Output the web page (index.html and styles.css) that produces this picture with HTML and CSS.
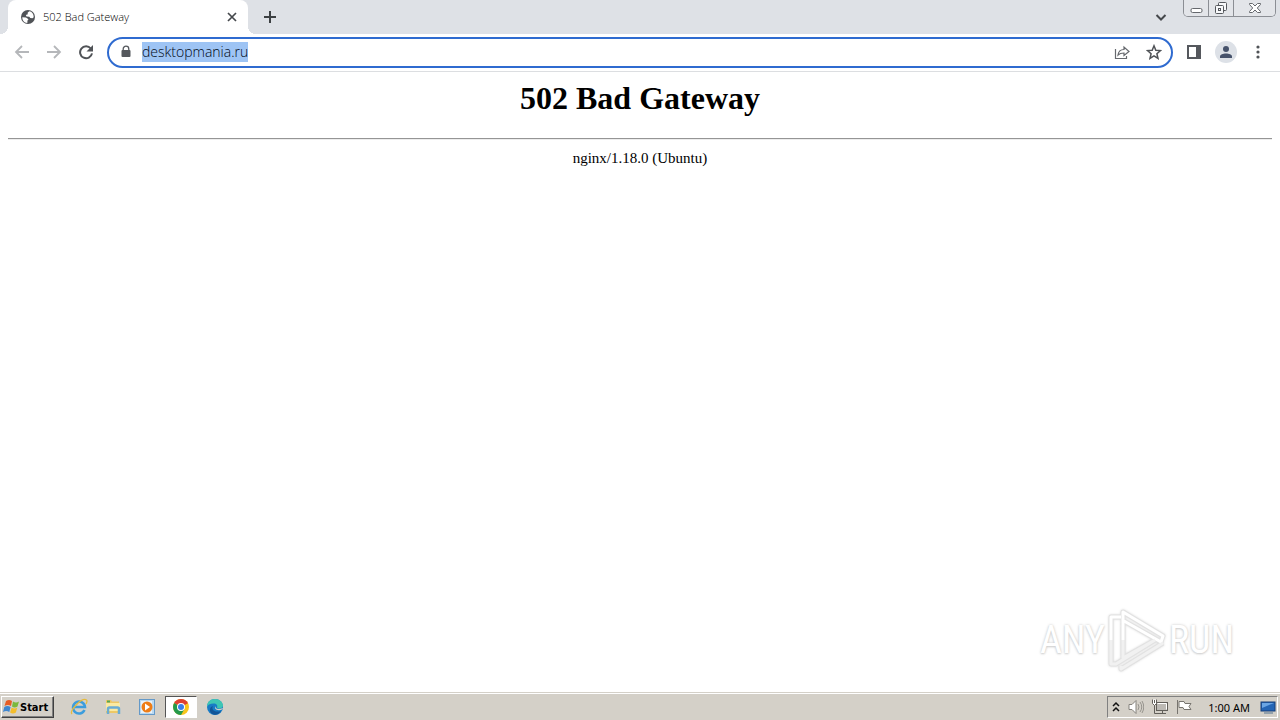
FILE: index.html
```html
<!DOCTYPE html>
<html lang="en">
<head>
<meta charset="utf-8">
<title>502 Bad Gateway</title>
<link rel="stylesheet" href="styles.css">
</head>
<body>
<div class="desktop">
  <header class="tabstrip">
    <div class="tab">
      <svg class="favicon" width="16" height="16" viewBox="0 0 16 16"><circle cx="8" cy="8" r="7" fill="#505357"/><path d="M2.3 8.2 6 8.4l2.500 1.900-1 1.200-.2 2.400C4.400 14 2.300 11.500 2.300 8.200zM9.300 2.300 7.600 3.800l.2 1.500-2 .8.700 1.400 2.800.2 1 1.400 2.200.2 1.200-1C13.800 5 12 2.600 9.300 2.300z" fill="#fff"/></svg>
      <span class="tab-title">502 Bad Gateway</span>
      <button class="plain tab-close" aria-label="Close tab"><svg width="16" height="16" viewBox="0 0 16 16"><path d="m4 4 8 8m0-8-8 8" stroke="#45484c" stroke-width="1.700"/></svg></button>
    </div>
    <button class="plain new-tab" aria-label="New tab"><svg width="16" height="16" viewBox="0 0 16 16"><path d="M8 2v12M2 8h12" stroke="#3c4043" stroke-width="2"/></svg></button>
    <button class="plain tab-search" aria-label="Search tabs"><svg width="16" height="16" viewBox="0 0 16 16"><path d="m3.500 6 4.500 4.500L12.500 6" fill="none" stroke="#45484c" stroke-width="2"/></svg></button>
    <div class="window-buttons">
      <button aria-label="Minimize"><svg width="16" height="16" viewBox="0 0 16 16"><rect x="3" y="8.500" width="11" height="4" rx="1.500" fill="#fff" stroke="#65686d"/></svg></button>
      <button aria-label="Restore"><svg width="16" height="16" viewBox="0 0 16 16"><g fill="#f7f8fa" stroke="#55585d"><rect x="5.500" y="2.500" width="8" height="8" rx="1"/><rect x="2.500" y="5.500" width="8" height="8" rx="1"/><rect x="5.500" y="8.500" width="2" height="2"/></g></svg></button>
      <button class="wide" aria-label="Close"><svg width="16" height="16" viewBox="0 0 16 16"><path d="M2.500 3.500h3L8 6l2.500-2.500h3v1L10.300 8l3.200 3.500v1h-3L8 10l-2.500 2.500h-3v-1L5.700 8 2.500 4.500z" fill="#fff" stroke="#65686d"/></svg></button>
    </div>
  </header>

  <nav class="toolbar">
    <button class="plain" aria-label="Back"><svg width="16" height="16" viewBox="0 0 16 16"><path d="M15 8H2m6-6L2 8l6 6" fill="none" stroke="#b5b7ba" stroke-width="1.800"/></svg></button>
    <button class="plain" aria-label="Forward"><svg width="16" height="16" viewBox="0 0 16 16"><path d="M1 8h13M8 2l6 6-6 6" fill="none" stroke="#b5b7ba" stroke-width="1.800"/></svg></button>
    <button class="plain" aria-label="Reload"><svg width="16" height="16" viewBox="0 0 16 16"><path d="M12.800 4.500A6 6 0 1 0 14 9.400" fill="none" stroke="#505357" stroke-width="2"/><path d="M15 1v6.500H8.500z" fill="#505357"/></svg></button>
    <div class="omnibox">
      <svg width="12" height="14" viewBox="0 0 12 14"><path d="M3.200 6V4a2.800 2.800 0 0 1 5.600 0v2" fill="none" stroke="#55585d" stroke-width="1.300"/><rect x="1.500" y="5" width="9" height="7" rx="1" fill="#55585d"/></svg>
      <input class="address" type="text" value="desktopmania.ru" aria-label="Address" spellcheck="false">
      <button class="plain" aria-label="Share"><svg width="16" height="16" viewBox="0 0 16 16"><path d="M1.500 5v9.500h11V12M4 11c.5-4 2.500-5.500 6-5.500V3l5 4.500-5 4V9C7.500 9 5.500 9.500 4 11z" fill="none" stroke="#66696e" stroke-width="1.200"/></svg></button>
      <button class="plain" aria-label="Bookmark this page"><svg width="16" height="16" viewBox="0 0 16 16"><path d="m8 1.800 1.800 4.400 4.700.4-3.600 3.100 1.100 4.600L8 11.800l-4 2.500 1.100-4.600-3.600-3.100 4.700-.4z" fill="none" stroke="#505357" stroke-width="1.500"/></svg></button>
    </div>
    <button class="plain" aria-label="Side panel"><svg width="16" height="16" viewBox="0 0 16 16"><path d="M1 1h14v14H1zM3 3v10h7V3z" fill="#55585d" fill-rule="evenodd"/></svg></button>
    <button class="plain avatar" aria-label="Profile"><svg width="16" height="16" viewBox="0 0 16 16"><circle cx="8" cy="5" r="3" fill="#46526b"/><path d="M2 14v-1.500C2 10.500 5 9.500 8 9.500s6 1 6 3V14z" fill="#46526b"/></svg></button>
    <button class="plain" aria-label="Menu"><svg width="16" height="16" viewBox="0 0 16 16"><g fill="#505357"><circle cx="8" cy="3" r="1.600"/><circle cx="8" cy="8" r="1.600"/><circle cx="8" cy="13" r="1.600"/></g></svg></button>
  </nav>

  <main class="page">
    <h1>502 Bad Gateway</h1>
    <hr>
    <p>nginx/1.18.0 (Ubuntu)</p>
    <div class="watermark" role="img" aria-label="ANY RUN">
      <span>ANY</span>
      <svg width="60" height="64" viewBox="0 0 60 64"><g fill="none" stroke-linejoin="round"><path d="M14 9H4v47h5L48 32M16 50V4l40 24-2 6-37-21M16 50l32-18M14 58v3l42-26" stroke="#e2e2e2" stroke-width="5"/><path d="M16 32V4l40 24-2 6-37-21M14 9H4v23" stroke="#fff" stroke-width="3"/><path d="M4 32v24h5L48 32M16 32v18l32-18M14 58v3l42-26" stroke="#f1f1f1" stroke-width="3"/></g></svg>
      <span>RUN</span>
    </div>
  </main>

  <footer class="taskbar">
    <button class="start"><svg width="17" height="16" viewBox="0 0 17 16"><path d="M3 2q3-2 6 0L8 7Q5 5 1.500 7z" fill="#e65c25"/><path d="M10 2.500q3 2 6 0l-1.500 5q-3 2-5.500 0z" fill="#7ab83c"/><path d="M1.300 8q3-1.800 6.300 0l-1.300 5q-3-2-6.300 0z" fill="#3e86d0"/><path d="M8.700 8.600q3 1.800 5.600 0l-1.400 5q-3 1.800-5.800 0z" fill="#f3bd2b"/></svg>Start</button>
    <div class="launchers">
      <button class="launcher" aria-label="Internet Explorer"><svg width="18" height="18" viewBox="0 0 18 18"><path d="M14.500 12A6 6 0 1 1 15 9H4" fill="none" stroke="#3c9ddd" stroke-width="2.500"/><path d="M2 16C-1 13 12-1 16.500 2c1 .8.300 2.500-.5 4" fill="none" stroke="#e6bb3d" stroke-width="1.300"/></svg></button>
      <button class="launcher" aria-label="Explorer"><svg width="18" height="18" viewBox="0 0 18 18"><path d="M2 2h5l1 1.500h7V15H2z" fill="#edc865"/><path d="M2 5h14v8H2z" fill="#faeaa2"/><path d="M4 16v-5q0-1.500 1.500-1.500h8Q15 9.500 15 11v5" fill="none" stroke="#69acd4" stroke-width="2.500"/><path d="M3 3.500h3" stroke="#55a657" stroke-width="2"/></svg></button>
      <button class="launcher" aria-label="Media Player"><svg width="18" height="18" viewBox="0 0 18 18"><rect x="1.500" y="1.500" width="15" height="15" fill="#b9d9f1" stroke="#6499c8"/><rect x="3" y="3" width="11" height="12" fill="#e9f2f9"/><circle cx="9" cy="9" r="5.500" fill="#ee7d16"/><path d="m7 5.500 5 3.500-5 3.500z" fill="#fff"/></svg></button>
      <button class="launcher active" aria-label="Chrome"><svg width="18" height="18" viewBox="0 0 18 18"><circle cx="9" cy="9" r="8" fill="#f8c51c"/><path d="M9 9 2.100 5A8 8 0 0 1 15.900 5z" fill="#de4032"/><path d="M2.100 5A8 8 0 0 0 9 17l3.500-6L9 9z" fill="#24994b"/><path d="M9 5h6.900L9 9z" fill="#de4032"/><circle cx="9" cy="9" r="4" fill="#fff"/><circle cx="9" cy="9" r="3" fill="#397ee9"/></svg></button>
      <button class="launcher" aria-label="Edge"><svg width="18" height="18" viewBox="0 0 18 18"><circle cx="9" cy="9" r="8" fill="#187bc5"/><path d="M1 9C1 4 4 1 9 1c5 0 8 3.500 8 6.500 0 3-5 4-6 2 1-2-.5-4-3.500-4C4 5.500 1.500 7 1 9z" fill="#3fc6b4"/><path d="M7 8c-2 3 1 7 8 5-2 4-7 5-10 2-2-3-1-6 2-7z" fill="#135597"/><path d="M10 8c-1 3 2 4 7 2-1 3-7 3-8 0z" fill="#d4d0c8"/></svg></button>
    </div>
    <div class="tray">
      <svg width="8" height="12" viewBox="0 0 8 12"><path d="m1 5 3-3 3 3M1 10l3-3 3 3" fill="none" stroke="#111" stroke-width="1.500"/></svg>
      <svg width="16" height="16" viewBox="0 0 16 16"><path d="M1 5.500h3l4-4v13l-4-4H1z" fill="#fff" stroke="#85827c"/><path d="M10 5q2 3 0 6M12 3q3.500 5 0 10M14 2q3.500 6 0 12" fill="none" stroke="#96938d"/></svg>
      <svg width="16" height="16" viewBox="0 0 16 16"><rect x="4.500" y="3.500" width="11" height="8" fill="#bcb9b4" stroke="#625f5a"/><path d="M5.500 4.500h9v6" fill="none" stroke="#fff"/><path d="M7 14.500h7M10.500 12v2M2.500 6v8.500H7" stroke="#625f5a" fill="none"/><path d="M.5.500v4l2 2 2-2v-4M2.500 1v3" fill="#fff" stroke="#625f5a"/></svg>
      <svg width="16" height="16" viewBox="0 0 16 16"><path d="M1.500 1v14M3 2.500h5l1 2h6l-2 3 2 3H8l-1-2H3z" fill="#fff" stroke="#77746f"/></svg>
      <time>1:00 AM</time>
      <svg width="16" height="16" viewBox="0 0 16 16"><rect x="1" y="3" width="14" height="9" fill="#2465b5" stroke="#163f79"/><path d="M2 4h12L2 9z" fill="#6aa5e4"/><path d="M4 14h9" stroke="#53728f"/></svg>
    </div>
  </footer>
</div>
<script src="main.js"></script>
</body>
</html>
```
FILE: styles.css
```css
* { box-sizing: border-box; }
body { margin: 0; background: #fff; color: #000; }
svg { display: block; flex: none; }
.desktop { display: flex; flex-direction: column; min-height: 100vh; font-family: "DejaVu Sans Condensed", "DejaVu Sans", sans-serif; font-size: 11px; }
.plain { display: grid; place-items: center; flex: none; padding: 0; border: 0; background: none; }

.tabstrip { display: flex; height: 34px; padding-left: 8px; background: #dee1e6; }
.tab { position: relative; display: flex; align-items: center; gap: 7px; width: 240px; padding: 0 8px 0 12px; background: #fff; border-radius: 8px 8px 0 0; }
.tab::before, .tab::after { content: ""; position: absolute; bottom: 0; width: 8px; height: 8px; }
.tab::before { right: 100%; background: radial-gradient(circle at 0 0, transparent 8px, #fff 8px); }
.tab::after { left: 100%; background: radial-gradient(circle at 100% 0, transparent 8px, #fff 8px); }
.tab-title { flex: 1; color: #000; white-space: nowrap; font-family: "Open Sans", sans-serif; font-weight: 300; line-height: 14px; }
.new-tab { margin-left: 14px; }
.tab-search { margin: 9px 14px 0 auto; height: 16px; }
.window-buttons { display: flex; align-self: flex-start; height: 17px; margin-right: 4px; border: 1px solid #8b8e94; border-top: 0; border-radius: 0 0 5px 5px; overflow: hidden; }
.window-buttons button { display: grid; place-items: center; width: 25px; padding: 0; border: 0; border-right: 1px solid #8b8e94; background: #e3e5e9; }
.window-buttons .wide { width: 41px; border-right: 0; }

.toolbar { display: flex; align-items: center; gap: 16px; height: 38px; padding: 0 14px 1px; border-bottom: 1px solid #dcdee1; background: #fff; }
.omnibox { display: flex; flex: 1; align-items: center; gap: 16px; height: 31px; margin: 0 -3px; padding: 0 9px 0 11px; border: 2px solid #2f6bd0; border-radius: 16px; }
.address { flex: 1; min-width: 0; height: 20px; margin-left: -6px; padding: 0; border: 0; outline: 0; background: none; color: #101c2c; caret-color: transparent; font: 300 14px/20px "Open Sans", sans-serif; }
.address::selection { background: rgba(157, 195, 244, 0.99); color: #000814; }
.avatar { width: 22px; height: 22px; margin: 0 -3px; border-radius: 50%; background: #dde1e7; }

.page { display: flex; flex: 1; flex-direction: column; padding: 8px; font-family: "Liberation Serif", serif; text-align: center; }
.page h1 { margin: 0 0 21px; font-size: 32px; line-height: 37px; }
.page hr { width: 100%; margin: 0 0 8px; border: 0; border-top: 1px solid #959595; border-bottom: 1px solid #ededed; }
.page p { margin: 0; font-size: 15px; line-height: 20px; }
.watermark { display: flex; align-items: center; gap: 2px; margin: auto 38px 12px auto; color: #fff; font: 400 38px/64px "Roboto Condensed", Roboto, sans-serif; text-shadow: 0 0 3px #ccc, 0 1px 2px #d4d4d4; }
.watermark svg { filter: drop-shadow(0 0 1px #ddd); }

.taskbar { display: flex; align-items: center; height: 28px; padding: 1px 2px 0 1px; border-top: 1px solid #d4d0c8; background: #d4d0c8; box-shadow: inset 0 1px #fff; }
.start { display: flex; align-items: center; height: 22px; padding: 0 5px 0 1px; border: 1px solid; border-color: #fff #404040 #404040 #fff; box-shadow: inset -1px -1px #808080; background: #d4d0c8; color: #000; font: bold 11px "DejaVu Sans Condensed", "DejaVu Sans", sans-serif; }
.launchers { display: flex; gap: 2px; margin-left: 9px; }
.launcher { display: grid; place-items: center; width: 32px; height: 22px; padding: 0; border: 1px solid transparent; background: none; }
.launcher.active { border-color: #555 #fff #fff #555; background: #fff; }
.tray { display: flex; align-items: center; gap: 8px; height: 22px; margin-left: auto; padding: 0 1px 0 4px; border: 1px solid; border-color: #808080 #fff #fff #808080; }
.tray time { margin: 0 2px 0 8px; font-family: "Noto Sans", sans-serif; }
```
FILE: main.js
```js
const address = document.querySelector(".address");
address.focus();
address.select();
```
